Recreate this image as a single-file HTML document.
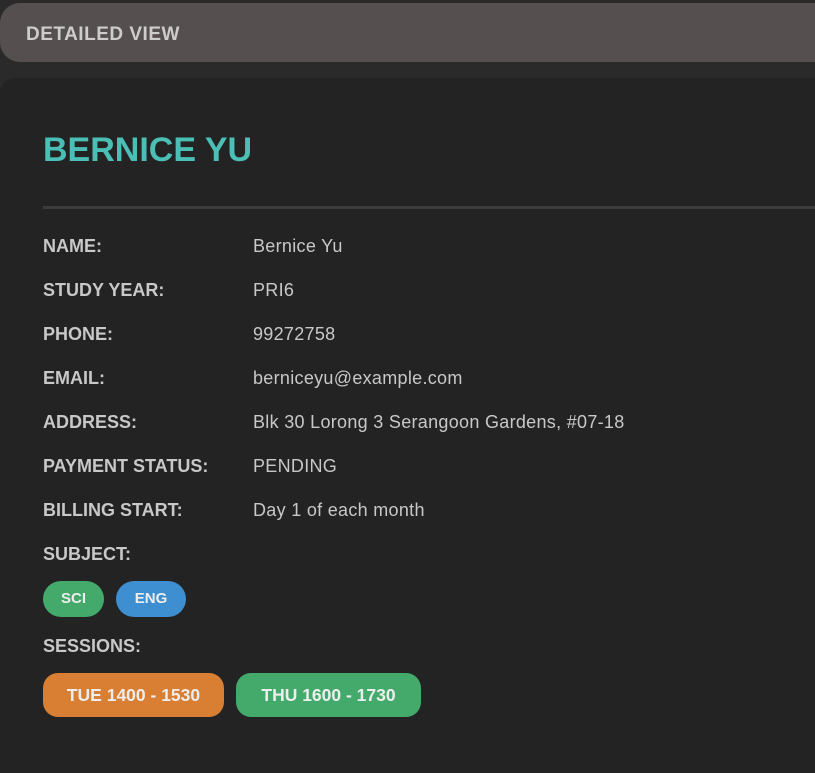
<!DOCTYPE html>
<html><head><style>
html,body{margin:0;width:815px;height:773px;overflow:hidden}
body{background:#2b2a2a;font-family:"Liberation Sans",sans-serif;position:relative}
.hdr{position:absolute;left:0;top:3px;width:840px;height:59px;background:#554f4f;border-radius:20px;}
.hdr span{position:absolute;left:26px;top:21px;font-size:19px;font-weight:bold;color:#cfcccc;letter-spacing:0.5px}
.card{position:absolute;left:0;top:78px;width:840px;height:720px;background:#232323;border-radius:15px}
h1{position:absolute;left:43px;top:130px;margin:0;font-size:34px;font-weight:bold;color:#4bbfb5;line-height:40px}
.div{position:absolute;left:43px;top:206px;width:800px;height:3px;background:#3c3c3c}
.r{position:absolute;left:43px;font-size:18px;color:#c8c8c8;line-height:22px;letter-spacing:0.3px}
.r b{display:inline-block;width:210px;letter-spacing:0}
.chip{position:absolute;color:#eee;font-weight:bold;text-align:center;border-radius:18px}
</style></head><body>
<div class="hdr"><span>DETAILED VIEW</span></div>
<div class="card"></div>
<h1>BERNICE YU</h1>
<div class="div"></div>
<div class="r" style="top:235px"><b>NAME:</b>Bernice Yu</div>
<div class="r" style="top:279px"><b>STUDY YEAR:</b>PRI6</div>
<div class="r" style="top:323px"><b>PHONE:</b>99272758</div>
<div class="r" style="top:367px"><b>EMAIL:</b>berniceyu@example.com</div>
<div class="r" style="top:411px"><b>ADDRESS:</b>Blk 30 Lorong 3 Serangoon Gardens, #07-18</div>
<div class="r" style="top:455px"><b>PAYMENT STATUS:</b>PENDING</div>
<div class="r" style="top:499px"><b>BILLING START:</b>Day 1 of each month</div>
<div class="r" style="top:543px"><b>SUBJECT:</b></div>
<div class="chip" style="left:43px;top:581px;width:61px;height:36px;line-height:36px;font-size:15px;background:#43aa6c">SCI</div>
<div class="chip" style="left:116px;top:581px;width:70px;height:36px;line-height:36px;font-size:15px;background:#3d8fd1">ENG</div>
<div class="r" style="top:635px"><b>SESSIONS:</b></div>
<div class="chip" style="left:43px;top:673px;width:181px;height:44px;line-height:44px;font-size:17.5px;background:#d97f33;border-radius:15px">TUE 1400 - 1530</div>
<div class="chip" style="left:236px;top:673px;width:185px;height:44px;line-height:44px;font-size:17.5px;background:#43aa6c;border-radius:15px">THU 1600 - 1730</div>
</body></html>
